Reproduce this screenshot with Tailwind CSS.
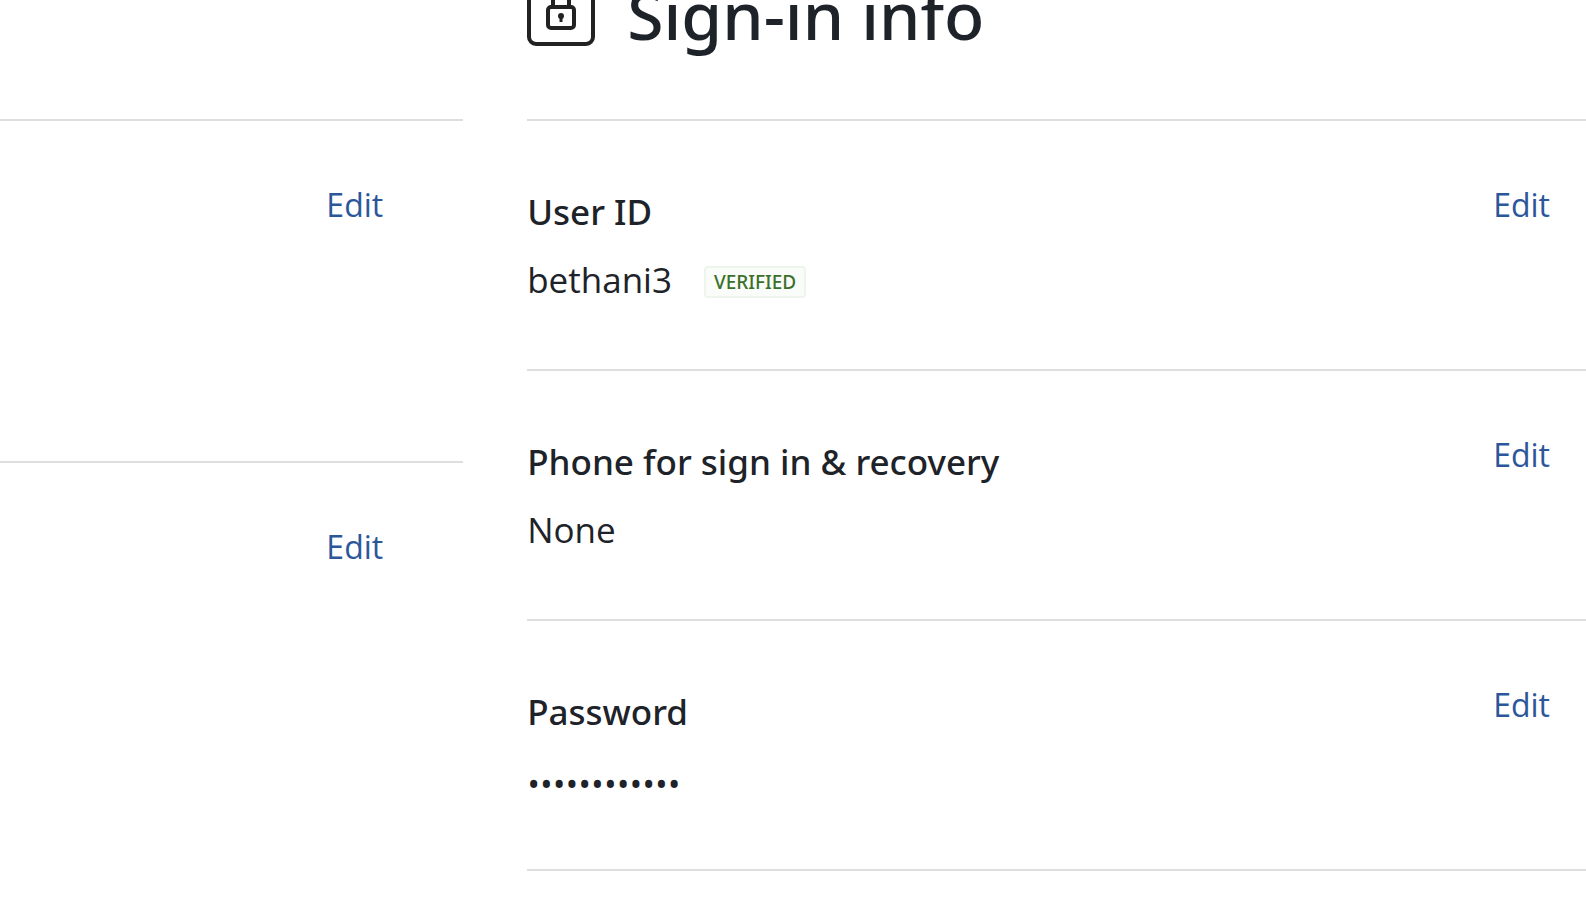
<!DOCTYPE html>
<html lang="en">
<head>
    <meta charset="UTF-8">
    <meta name="viewport" content="width=device-width, initial-scale=1.0">
    <title>Sign-in info</title>
    <script src="https://cdn.jsdelivr.net/npm/@tailwindcss/browser@4"></script>
</head>
<body class="min-h-screen overflow-hidden bg-white font-['Open_Sans',sans-serif] text-[#1d2329]">
    <div class="grid grid-cols-[7fr_16fr] gap-16">
        <!-- Contact column -->
        <section class="pt-[119px]" aria-label="Contact info">
            <div class="flex justify-end border-t-2 border-[#dedede] pt-[60px] pr-20 pb-[232px]">
                <a href="#" class="text-[32px] leading-[48px] text-[#2b579a]">Edit</a>
            </div>
            <div class="flex justify-end border-t-2 border-[#dedede] pt-[60px] pr-20">
                <a href="#" class="text-[32px] leading-[48px] text-[#2b579a]">Edit</a>
            </div>
        </section>

        <!-- Sign-in column -->
        <section>
            <header class="-mt-[22px] flex items-start gap-8 pb-[69px]">
                <svg class="size-[68px] shrink-0" viewBox="0 0 68 68" fill="none" stroke="#222" stroke-width="4" aria-hidden="true">
                    <rect x="2" y="2" width="64" height="64" rx="7" />
                    <rect x="21" y="29" width="26" height="21" rx="3" />
                    <path d="M26 28v-5a8 8 0 0 1 16 0v5" />
                    <circle cx="34" cy="38" r="3" fill="#222" stroke="none" />
                    <path d="M34 38v6" stroke-width="3" />
                </svg>
                <h1 class="font-['Noto_Sans',sans-serif] text-[66px] leading-[72px] font-medium whitespace-nowrap">Sign-in info</h1>
            </header>

            <div class="flex justify-between border-t-2 border-[#dedede] pt-[60px] pr-9 pb-[65px]">
                <div class="pt-[7px]">
                    <h2 class="font-['Noto_Sans',sans-serif] text-[35px] leading-[48px] font-medium">User ID</h2>
                    <div class="mt-5 flex items-center gap-8">
                        <span class="text-[35px] leading-[48px]">bethani3</span>
                        <span class="mt-1 rounded-sm border-2 border-[#edf5ed] bg-[#f9fcf9] px-2 font-['Noto_Sans',sans-serif] text-[19px] leading-[28px] font-medium text-[#3b702a]">VERIFIED</span>
                    </div>
                </div>
                <a href="#" class="self-start text-[32px] leading-[48px] text-[#2b579a]">Edit</a>
            </div>

            <div class="flex justify-between border-t-2 border-[#dedede] pt-[60px] pr-9 pb-[65px]">
                <div class="pt-[7px]">
                    <h2 class="font-['Noto_Sans',sans-serif] text-[35px] leading-[48px] font-medium">Phone for sign in &amp; recovery</h2>
                    <p class="mt-5 text-[35px] leading-[48px]">None</p>
                </div>
                <a href="#" class="self-start text-[32px] leading-[48px] text-[#2b579a]">Edit</a>
            </div>

            <div class="flex justify-between border-y-2 border-[#dedede] pt-[60px] pr-9 pb-[61px]">
                <div class="pt-[7px]">
                    <h2 class="font-['Noto_Sans',sans-serif] text-[35px] leading-[48px] font-medium">Password</h2>
                    <p class="mt-6 text-[34px] leading-[48px]">••••••••••••</p>
                </div>
                <a href="#" class="self-start text-[32px] leading-[48px] text-[#2b579a]">Edit</a>
            </div>
        </section>
    </div>
</body>
</html>
